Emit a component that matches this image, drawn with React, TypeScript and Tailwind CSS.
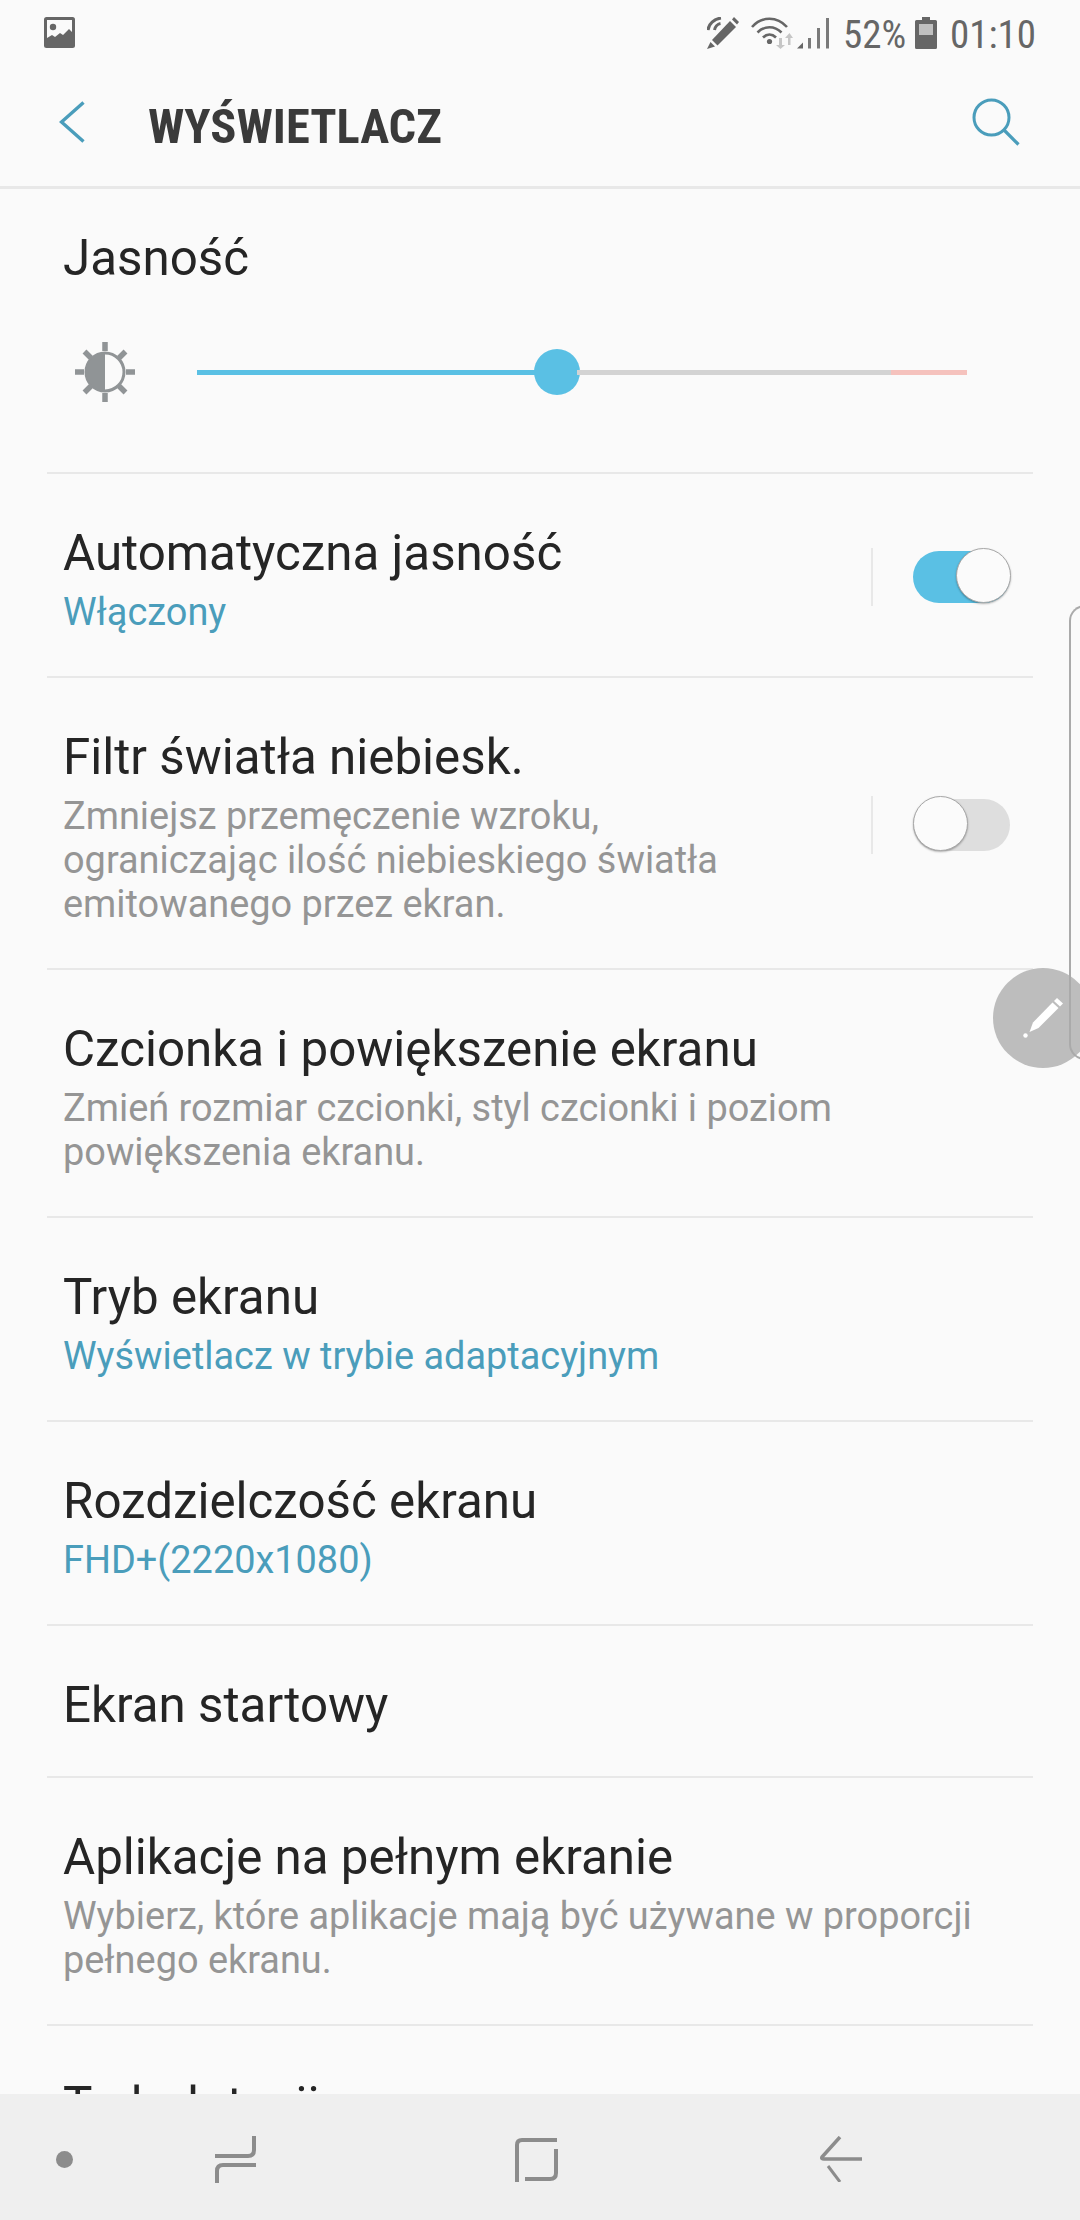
import React from "react";

const BLUE = "text-[#4a9dbb]";

const ImageIcon = () => (
  <svg width="31" height="31" viewBox="0 0 31 31">
    <rect x="0" y="0" width="31" height="31" rx="2.5" fill="#666" />
    <path d="M3 3h25v12l-3-3-6 6-3-2-5 4-3-2-5 3z" fill="#fafafa" />
    <circle cx="9" cy="10" r="3.2" fill="#666" />
  </svg>
);

const PenWaveIcon = () => (
  <svg width="33" height="32" viewBox="0 0 33 32" fill="none">
    <path d="M27 0l5 5-2 2.500-5-5z" fill="#666" />
    <path d="M23 4l6 6-18.500 18.500L5 23z" fill="#666" />
    <path d="M3.500 25L8 29.500 0 32z" fill="#666" />
    <path d="M1 13c.6-6 6-11 13-12" stroke="#666" strokeWidth="3" />
    <path d="M7.500 13c.5-3 3-6 6-6.500" stroke="#666" strokeWidth="3" />
  </svg>
);

const WifiIcon = () => (
  <svg width="42" height="32" viewBox="0 0 42 32" fill="none">
    <path d="M1 10c10-11 25-11 35 0" stroke="#666" strokeWidth="2.600" />
    <path d="M6.500 15.500c7-7 17-7 24 0" stroke="#666" strokeWidth="2.600" />
    <path d="M12 20.500c4-4 9-4 13 0" stroke="#666" strokeWidth="2.600" />
    <circle cx="18.500" cy="24.500" r="2.600" fill="#666" />
    <path d="M28 21v7h-3l4.500 4 4.500-4h-3v-7z" fill="#c6c6c6" />
    <path d="M37 28v-7h-3l4.500-5 3.500 5h-2.500v7z" fill="#c6c6c6" />
  </svg>
);

const SignalIcon = () => (
  <svg width="32" height="32" viewBox="0 0 32 32">
    <path d="M0 31.500l6-6v6z" fill="#666" />
    <rect x="11" y="21" width="3" height="10.500" fill="#7a7a7a" />
    <rect x="20" y="11" width="3" height="20.500" fill="#7a7a7a" />
    <rect x="29" y="1" width="3" height="30.500" fill="#7a7a7a" />
  </svg>
);

const BatteryIcon = () => (
  <svg width="22" height="32" viewBox="0 0 22 32">
    <path d="M7 0h8v3h5.500a1.500 1.500 0 0 1 1.500 1.500V30.500a1.500 1.500 0 0 1-1.500 1.500H1.500A1.500 1.500 0 0 1 0 30.500V4.500A1.500 1.500 0 0 1 1.500 3H7z" fill="#666" />
    <rect x="4" y="7" width="14" height="11" fill="#c0c0c0" />
  </svg>
);

const BackIcon = () => (
  <svg width="26" height="42" viewBox="0 0 26 42" fill="none">
    <path d="M24.500 1.500L2.500 21l22 19.500" stroke="#4a9dbb" strokeWidth="3.400" />
  </svg>
);

const SearchIcon = () => (
  <svg width="48" height="48" viewBox="0 0 48 48" fill="none">
    <circle cx="19.500" cy="19.500" r="17.500" stroke="#4a9dbb" strokeWidth="3" />
    <path d="M32 32l14.500 14.500" stroke="#4a9dbb" strokeWidth="3.200" />
  </svg>
);

const SunIcon = () => (
  <svg width="62" height="62" viewBox="0 0 62 62" fill="none">
    <g stroke="#909496" strokeWidth="5.500">
      <path d="M31 1v9M31 52v9M1 31h9M52 31h9M10.500 10.500l6.500 6.500M45 45l6.500 6.500M51.500 10.500L45 17M17 45l-6.500 6.500" />
    </g>
    <circle cx="31" cy="31" r="19" stroke="#909496" strokeWidth="3" fill="#fafafa" />
    <path d="M31 12a19 19 0 0 0 0 38z" fill="#909496" />
  </svg>
);

const Toggle = ({ on }: { on: boolean }) => (
  <div className="flex items-center h-[58px] mb-[5px]">
    <div className="w-[2px] h-[58px] bg-[#e8e8e8] mr-[40px]" />
    <div className={`relative w-[97px] h-[52px] rounded-full ${on ? "bg-[#5ac0e4]" : "bg-[#dedede]"}`}>
      <div
        className={`absolute top-[-3px] w-[55px] h-[55px] rounded-full bg-[#fbfbfb] border border-[#a8a8a8] shadow-[0_1px_2px_rgba(0,0,0,0.3)] ${
          on ? "right-[-1px]" : "left-0"
        }`}
      />
    </div>
  </div>
);

type Row = { title: string; sub?: string[]; value?: string; toggle?: boolean };

const rows: Row[] = [
  { title: "Automatyczna jasność", value: "Włączony", toggle: true },
  {
    title: "Filtr światła niebiesk.",
    sub: ["Zmniejsz przemęczenie wzroku,", "ograniczając ilość niebieskiego światła", "emitowanego przez ekran."],
    toggle: false,
  },
  {
    title: "Czcionka i powiększenie ekranu",
    sub: ["Zmień rozmiar czcionki, styl czcionki i poziom", "powiększenia ekranu."],
  },
  { title: "Tryb ekranu", value: "Wyświetlacz w trybie adaptacyjnym" },
  { title: "Rozdzielczość ekranu", value: "FHD+(2220x1080)" },
  { title: "Ekran startowy" },
  {
    title: "Aplikacje na pełnym ekranie",
    sub: ["Wybierz, które aplikacje mają być używane w proporcji", "pełnego ekranu."],
  },
  { title: "Tryb dotacji" },
];

const SettingRow = ({ row }: { row: Row }) => (
  <div className="mx-[47px] pl-[16px] pr-[23px] pt-[50px] pb-[42px] border-b-2 border-[#e8e8e8] flex items-center justify-between">
    <div>
      <div className="text-[49.300px] leading-[58px] text-[#252525]">{row.title}</div>
      {row.value && <div className={`mt-[8px] text-[37.900px] leading-[44px] ${BLUE}`}>{row.value}</div>}
      {row.sub && (
        <div className="mt-[8px] text-[37.900px] leading-[44px] text-[#959595]">
          {row.sub.map((line) => (
            <div key={line}>{line}</div>
          ))}
        </div>
      )}
    </div>
    {row.toggle !== undefined && <Toggle on={row.toggle} />}
  </div>
);

export default function App() {
  return (
    <div className="relative w-[1080px] h-[2220px] overflow-hidden bg-[#fafafa] font-['Roboto',sans-serif] flex flex-col">
      {/* status bar */}
      <div className="h-[64px] shrink-0 flex items-start justify-between pt-[17px] pl-[44px] pr-[48px]">
        <ImageIcon />
        <div className="flex items-start text-[#666]">
          <PenWaveIcon />
          <div className="ml-[11px]"><WifiIcon /></div>
          <div className="ml-[4px]"><SignalIcon /></div>
          <div className="ml-[14px] w-[60px] text-[39px] leading-[36px] [font-stretch:condensed] whitespace-nowrap">52%</div>
          <div className="ml-[12px]"><BatteryIcon /></div>
          <div className="ml-[13px] w-[82px] text-[39px] leading-[36px] [font-stretch:condensed] whitespace-nowrap">01:10</div>
        </div>
      </div>

      {/* header */}
      <div className="h-[125px] shrink-0 border-b-[3px] border-[#e8e8e8] flex items-center justify-between pl-[59px] pr-[60px] pb-[6px]">
        <div className="flex items-center">
          <BackIcon />
          <div className="ml-[63px] mt-[10px] text-[48.500px] font-bold text-[#3a3a3a] [font-stretch:condensed]">WYŚWIETLACZ</div>
        </div>
        <SearchIcon />
      </div>

      <div className="flex-1 overflow-hidden">
        {/* brightness */}
        <div className="mx-[47px] h-[285px] border-b-2 border-[#e8e8e8] pl-[16px] pt-[40px]">
          <div className="text-[49.300px] leading-[58px] text-[#252525]">Jasność</div>
          <div className="flex items-center mt-[54px] h-[62px]">
            <div className="ml-[11px]"><SunIcon /></div>
            <div className="ml-[61px] flex items-center">
              <div className="w-[340px] h-[5px] bg-[#5ac0e4]" />
              <div className="w-[46px] h-[46px] rounded-full bg-[#5ac0e4] -mx-[3px]" />
              <div className="w-[314px] h-[5px] bg-[#d3d3d3]" />
              <div className="w-[76px] h-[5px] bg-[#f5c2bd]" />
            </div>
          </div>
        </div>

        {rows.map((row) => (
          <SettingRow key={row.title} row={row} />
        ))}
      </div>

      {/* nav bar */}
      <div className="h-[126px] shrink-0 bg-[#efefef] relative flex items-center pt-[4px]">
        <div className="ml-[56px] w-[17px] h-[17px] rounded-full bg-[#8c8c8c]" />
        <svg className="ml-[142px]" width="41" height="47" viewBox="0 0 41 47" fill="none" stroke="#8c8c8c">
          <path d="M0 20h33q6 0 6-6V0" strokeWidth="4" />
          <path d="M41 29H8q-6 0-6 6v12" strokeWidth="4" />
        </svg>
        <svg className="ml-[259px]" width="43" height="45" viewBox="0 0 43 45" fill="none" stroke="#8c8c8c">
          <path d="M42 3H7Q2 3 2 8v37" strokeWidth="4" />
          <path d="M10 42h25q6 0 6-6V12" strokeWidth="4" />
        </svg>
        <svg className="ml-[262px]" width="42" height="46" viewBox="0 0 42 46" fill="none" stroke="#8c8c8c">
          <path d="M20 1L2 21q-1 2 2 2h38" strokeWidth="3.500" />
          <path d="M8 30l12 16" strokeWidth="3" />
        </svg>
      </div>

      {/* floating edge panel handle and edit button */}
      <div className="absolute left-[993px] top-[968px] w-[100px] h-[100px] rounded-full bg-[#bdbdbd] flex items-center justify-center">
        <svg width="40" height="40" viewBox="0 0 40 40">
          <path d="M34 0l6 5.500-3 3-6-5.500z" fill="#fff" />
          <path d="M29.500 4.500l6 5.500-20 20-9 4 3.500-9.500z" fill="#fff" />
          <circle cx="2.500" cy="37.500" r="2.200" fill="#fff" />
        </svg>
      </div>
      <div className="absolute left-[1069px] top-[605px] w-[30px] h-[455px] rounded-l-[16px] border-l-2 border-t-2 border-b-2 border-[#aaa]" />
    </div>
  );
}
